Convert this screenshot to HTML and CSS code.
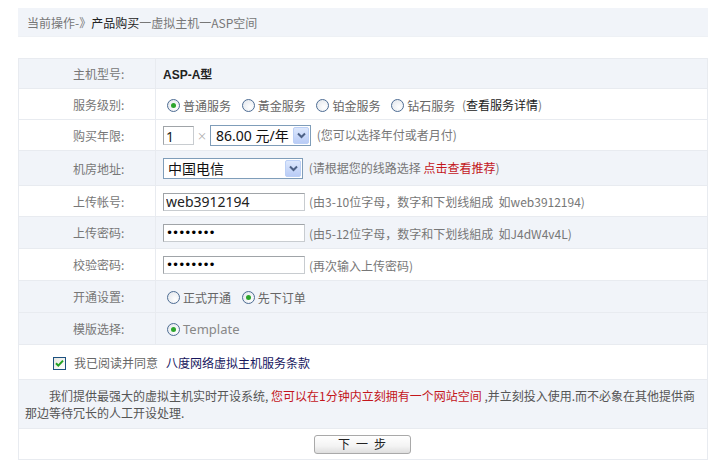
FILE: index.html
```html
<!DOCTYPE html>
<html lang="zh-CN">
<head>
<meta charset="utf-8">
<title>产品购买</title>
<link rel="stylesheet" href="styles.css">
</head>
<body>
<div class="page">
  <div class="crumb"><span class="c-grey">当前操作-》</span><span class="c-dark">产品购买</span><span class="c-grey">一虚拟主机一ASP空间</span></div>

  <table class="form">
    <colgroup><col class="col-label"><col></colgroup>
    <tr class="r1 alt">
      <td class="lbl">主机型号:</td>
      <td class="val"><b class="model">ASP-A型</b></td>
    </tr>
    <tr class="r2">
      <td class="lbl">服务级别:</td>
      <td class="val">
        <span class="opt"><span class="radio on"></span>普通服务</span>
        <span class="opt"><span class="radio"></span>黃金服务</span>
        <span class="opt"><span class="radio"></span>铂金服务</span>
        <span class="opt"><span class="radio"></span>钻石服务</span>
        <span class="hint">(<span class="c-dark">查看服务详情</span>)</span>
      </td>
    </tr>
    <tr class="r3">
      <td class="lbl">购买年限:</td>
      <td class="val">
        <input class="txt qty" type="text" value="1"><span class="times">×</span><span class="select sel-price"><span class="sel-text">86.00 元/年</span><span class="sel-arrow"><svg width="9" height="7" viewBox="0 0 9 7"><path d="M1 1.5 L4.5 5 L8 1.5" fill="none" stroke="#4d6185" stroke-width="2"/></svg></span></span>
        <span class="hint">(您可以选择年付或者月付)</span>
      </td>
    </tr>
    <tr class="r4 alt">
      <td class="lbl">机房地址:</td>
      <td class="val">
        <span class="select sel-room"><span class="sel-text">中国电信</span><span class="sel-arrow"><svg width="9" height="7" viewBox="0 0 9 7"><path d="M1 1.5 L4.5 5 L8 1.5" fill="none" stroke="#4d6185" stroke-width="2"/></svg></span></span>
        <span class="hint">(请根据您的线路选择 <span class="c-red">点击查看推荐</span>)</span>
      </td>
    </tr>
    <tr class="r5">
      <td class="lbl">上传帐号:</td>
      <td class="val"><input class="txt field" type="text" value="web3912194"><span class="hint">(由3-10位字母，数字和下划线組成&nbsp; 如web3912194)</span></td>
    </tr>
    <tr class="r6 alt">
      <td class="lbl">上传密码:</td>
      <td class="val"><input class="txt field pw" type="password" value="12345678"><span class="hint">(由5-12位字母，数字和下划线組成&nbsp; 如J4dW4v4L)</span></td>
    </tr>
    <tr class="r7">
      <td class="lbl">校验密码:</td>
      <td class="val"><input class="txt field pw" type="password" value="12345678"><span class="hint">(再次输入上传密码)</span></td>
    </tr>
    <tr class="r8 alt">
      <td class="lbl">开通设置:</td>
      <td class="val">
        <span class="opt"><span class="radio"></span>正式开通</span>
        <span class="opt"><span class="radio on"></span>先下订单</span>
      </td>
    </tr>
    <tr class="r9 alt">
      <td class="lbl">模版选择:</td>
      <td class="val"><span class="opt"><span class="radio on"></span><span class="tpl">Template</span></span></td>
    </tr>
    <tr class="r10">
      <td class="agree" colspan="2"><span class="check"><svg width="11" height="11" viewBox="0 0 11 11"><path d="M2 5.2 L4.3 7.6 L9 2.6" fill="none" stroke="#21a121" stroke-width="2"/></svg></span><span class="c-grey2">我已阅读并同意</span><span class="terms">八度网络虚拟主机服务条款</span></td>
    </tr>
    <tr class="r11 alt">
      <td class="desc" colspan="2"><p class="line">我们提供最强大的虚拟主机实时开设系统, <span class="c-red">您可以在1分钟内立刻拥有一个网站空间</span> ,并立刻投入使用.而不必象在其他提供商</p><p class="line2">那边等待冗长的人工开设处理.</p></td>
    </tr>
    <tr class="r12">
      <td class="btncell" colspan="2"><button class="next" type="button">下一步</button></td>
    </tr>
  </table>
</div>
</body>
</html>
```

FILE: styles.css
```css
html, body {
  margin: 0;
  padding: 0;
  background: #fff;
}
body {
  font-family: "Noto Sans CJK SC", "Noto Sans", sans-serif;
  font-size: 12px;
  color: #555;
}
.page {
  padding: 8px 0 0 18px;
  width: 690px;
}
.crumb {
  height: 29px;
  line-height: 29px;
  background: #f1f4f9;
  padding-left: 9px;
  border-bottom: 1px solid #eef1f5;
  box-sizing: border-box;
}
.c-grey { color: #777; }
.c-grey2 { color: #666; }
.c-dark { color: #222; }
.c-red { color: #c3161c; }

.form {
  margin-top: 21px;
  width: 690px;
  border-collapse: collapse;
  table-layout: fixed;
}
.col-label { width: 137px; }
.form td {
  border: 1px solid #e8ebf0;
  padding: 0;
  vertical-align: middle;
  background: #fff;
}
.form tr.alt td { background: #f1f4f9; }
.r1 { height: 30px; }
.r2 { height: 31px; }
.r3 { height: 31px; }
.r4 { height: 35px; }
.r5 { height: 31px; }
.r6, .r7, .r8, .r9 { height: 32px; }
.r10 { height: 35px; }
.r11 { height: 49px; }
.r12 { height: 31px; }

.lbl {
  color: #777;
  padding-left: 54px !important;
}
.val {
  padding-left: 7px !important;
  white-space: nowrap;
}
.model {
  color: #222;
  font-weight: bold;
  font-family: "Liberation Sans", "Noto Sans CJK SC", sans-serif;
  font-size: 12px;
}

.opt {
  display: inline-flex;
  align-items: center;
  margin-right: 4px;
  color: #666;
  vertical-align: middle;
}
.radio {
  display: inline-block;
  width: 11px;
  height: 11px;
  border: 1px solid #4e6d94;
  border-radius: 50%;
  background: radial-gradient(circle at 65% 65%, #fff 0, #e9ecf0 70%, #d7dbe2 100%);
  margin: 0 3px 0 4px;
  position: relative;
  box-sizing: content-box;
}
.radio.on::after {
  content: "";
  position: absolute;
  left: 3px;
  top: 3px;
  width: 5px;
  height: 5px;
  border-radius: 50%;
  background: #2ca52c;
}
.tpl {
  font-family: "Noto Sans", sans-serif;
  font-size: 13px;
  color: #888;
}
.hint {
  color: #777;
  vertical-align: middle;
}

.txt {
  font-family: "Noto Sans", "DejaVu Sans", sans-serif;
  font-size: 14px;
  color: #222;
  border: 1px solid #a0a4a8;
  border-right-color: #c8ccd0;
  border-bottom-color: #c8ccd0;
  padding: 0 2px;
  margin: 0;
  background: #fff;
  box-sizing: border-box;
  vertical-align: middle;
  outline: none;
}
.qty {
  width: 31px;
  height: 19px;
  padding-top: 3px;
  line-height: 14px;
}
.field {
  width: 142px;
  height: 18px;
  margin-right: 4px;
  line-height: 16px;
}
.pw {
  font-size: 12px;
  letter-spacing: -1px;
  font-family: "DejaVu Sans", sans-serif;
  color: #000;
}
.times {
  color: #aaa;
  font-size: 10px;
  margin: 0 3px;
  vertical-align: middle;
}
.select {
  display: inline-flex;
  align-items: center;
  justify-content: space-between;
  height: 21px;
  border: 1px solid #7f9db9;
  background: #fff;
  box-sizing: border-box;
  vertical-align: middle;
  margin-right: 3px;
  padding: 1px;
}
.sel-price { width: 101px; }
.sel-room { width: 140px; }
.sel-text {
  font-family: "Noto Sans", "Noto Sans CJK SC", sans-serif;
  font-size: 14px;
  color: #111;
  padding-left: 4px;
  line-height: 17px;
}
.sel-room .sel-text {
  font-family: "Noto Sans CJK SC", sans-serif;
  padding-left: 3px;
}
.sel-arrow {
  width: 16px;
  height: 17px;
  box-sizing: border-box;
  border: 1px solid #bcd0f6;
  border-radius: 2px;
  background: linear-gradient(#dde8fd, #b9ccf6);
  display: flex;
  align-items: center;
  justify-content: center;
}

.agree {
  padding-left: 34px !important;
  color: #666;
}
.check {
  display: inline-block;
  width: 11px;
  height: 11px;
  border: 1px solid #1c5180;
  background: linear-gradient(135deg, #e6e6e0, #fff);
  vertical-align: -2px;
  margin-right: 8px;
  position: relative;
}
.check svg {
  position: absolute;
  left: 0;
  top: 0;
}
.terms {
  color: #17175e;
  margin-left: 8px;
}
.desc {
  padding: 0 4px 0 6px !important;
  line-height: 17px;
  color: #555;
}
.line, .line2 {
  margin: 0;
  white-space: nowrap;
}
.line { padding-left: 24px; }
.btncell {
  text-align: center;
}
.next {
  width: 97px;
  height: 19px;
  border: 1px solid #a9a9a9;
  border-radius: 3px;
  background: linear-gradient(#ffffff, #f3f3f3 60%, #dedede);
  font-family: "Noto Sans CJK SC", sans-serif;
  font-size: 12px;
  letter-spacing: 6px;
  text-indent: 6px;
  color: #222;
  padding: 0;
  line-height: 16px;
  margin-left: -2px;
}
```
